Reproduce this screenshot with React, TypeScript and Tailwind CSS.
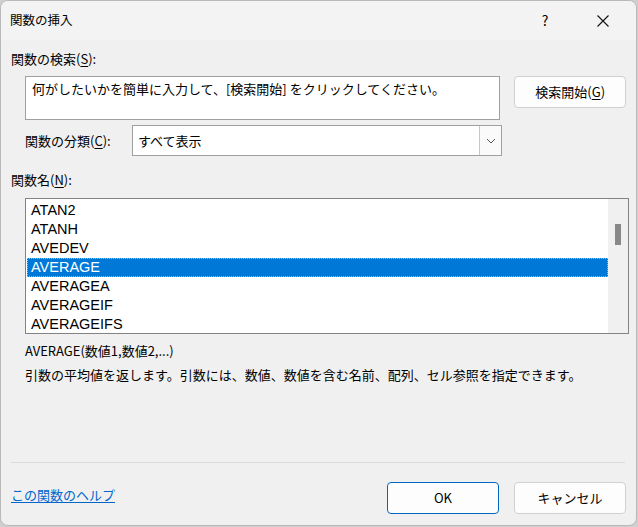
import React from "react";

const items = ["ATAN2", "ATANH", "AVEDEV", "AVERAGE", "AVERAGEA", "AVERAGEIF", "AVERAGEIFS"];

export default function App() {
  return (
    <div className="w-[638px] h-[527px] bg-[#cfcfcf] text-black font-['Noto_Sans_CJK_JP','Noto_Sans',sans-serif]">
      <div className="w-[637px] h-[526px] rounded-[8px] border border-[#b9b9b9] bg-[#f0f0f0] overflow-hidden flex flex-col">
        {/* title bar */}
        <div className="h-[39px] bg-[#f3f3f3] flex items-center pl-[9px] text-[12.5px] text-black">
          <span className="mt-[-1px]">関数の挿入</span>
          <div className="flex-1" />
          <span className="w-[46px] text-center text-[14px] mr-[12px]">?</span>
          <svg width="46" height="20" viewBox="0 0 46 20" className="mr-[10px]">
            <path d="M17.5 4.5 L28.5 15.5 M28.5 4.5 L17.5 15.5" stroke="#111" strokeWidth="1.1" fill="none" />
          </svg>
        </div>
        {/* body */}
        <div className="flex-1 flex flex-col pl-[10px] pr-[10px] text-[13px] leading-[18px]">
          <div className="mt-[10px] h-[18px]">
            関数の検索(<span className="underline underline-offset-2">S</span>):
          </div>
          <div className="mt-[8px] flex">
            <div className="ml-[14px] w-[477px] h-[44px] bg-white border border-[#a0a0a0] px-[6px] pt-[3px]">
              何がしたいかを簡単に入力して、[検索開始] をクリックしてください。
            </div>
            <button className="ml-[14px] w-[112px] h-[32px] bg-[#fdfdfd] border border-[#d0d0d0] rounded-[4px] text-[13px]">
              検索開始(<span className="underline underline-offset-2">G</span>)
            </button>
          </div>
          <div className="mt-[5px] flex items-center">
            <span className="ml-[14px] w-[107px]">
              関数の分類(<span className="underline underline-offset-2">C</span>):
            </span>
            <div className="w-[370px] h-[31px] bg-white border border-[#a0a0a0] flex items-center">
              <span className="flex-1 pl-[5px]">すべて表示</span>
              <div className="w-[22px] h-[29px] border-l border-[#c8c8c8] bg-[#fafafa] flex items-center justify-center">
                <svg width="10" height="6" viewBox="0 0 10 6">
                  <path d="M1 1 L5 5 L9 1" stroke="#555" strokeWidth="1" fill="none" />
                </svg>
              </div>
            </div>
          </div>
          <div className="mt-[15px] h-[18px]">
            関数名(<span className="underline underline-offset-2">N</span>):
          </div>
          <div className="mt-[9px] ml-[14px] w-[604px] h-[136px] border border-[#838383] bg-white flex">
            <div className="flex-1 pt-[2px] pl-[1px] font-['Liberation_Sans',sans-serif] text-[14.5px]">
              {items.map((it) => (
                <div
                  key={it}
                  className={
                    it === "AVERAGE"
                      ? "h-[19px] leading-[17px] pl-[3px] bg-[#0078d7] text-white border border-dotted border-[#f0b040]"
                      : "h-[19px] leading-[19px] pl-[4px] text-black"
                  }
                >
                  {it}
                </div>
              ))}
            </div>
            <div className="w-[20px] bg-[#f0f0f0] relative">
              <div className="absolute left-[7px] top-[25px] w-[6px] h-[21px] bg-[#888]" />
            </div>
          </div>
          <div className="mt-[8px] ml-[14px] h-[18px]">AVERAGE(数値1,数値2,...)</div>
          <div className="mt-[6px] ml-[14px] h-[18px]">
            引数の平均値を返します。引数には、数値、数値を含む名前、配列、セル参照を指定できます。
          </div>
          <div className="flex-1" />
          <div className="h-px bg-[#dadada] mr-[1px]" />
          <div className="mt-[19px] mb-[11px] flex items-center">
            <a className="text-[#0066cc] underline underline-offset-2 mt-[-6px]">この関数のヘルプ</a>
            <div className="flex-1" />
            <button className="w-[112px] h-[32px] bg-[#fdfdfd] border border-[#0067c0] rounded-[4px]">OK</button>
            <button className="ml-[15px] w-[112px] h-[32px] bg-[#fdfdfd] border border-[#d0d0d0] rounded-[4px]">キャンセル</button>
          </div>
        </div>
      </div>
    </div>
  );
}
